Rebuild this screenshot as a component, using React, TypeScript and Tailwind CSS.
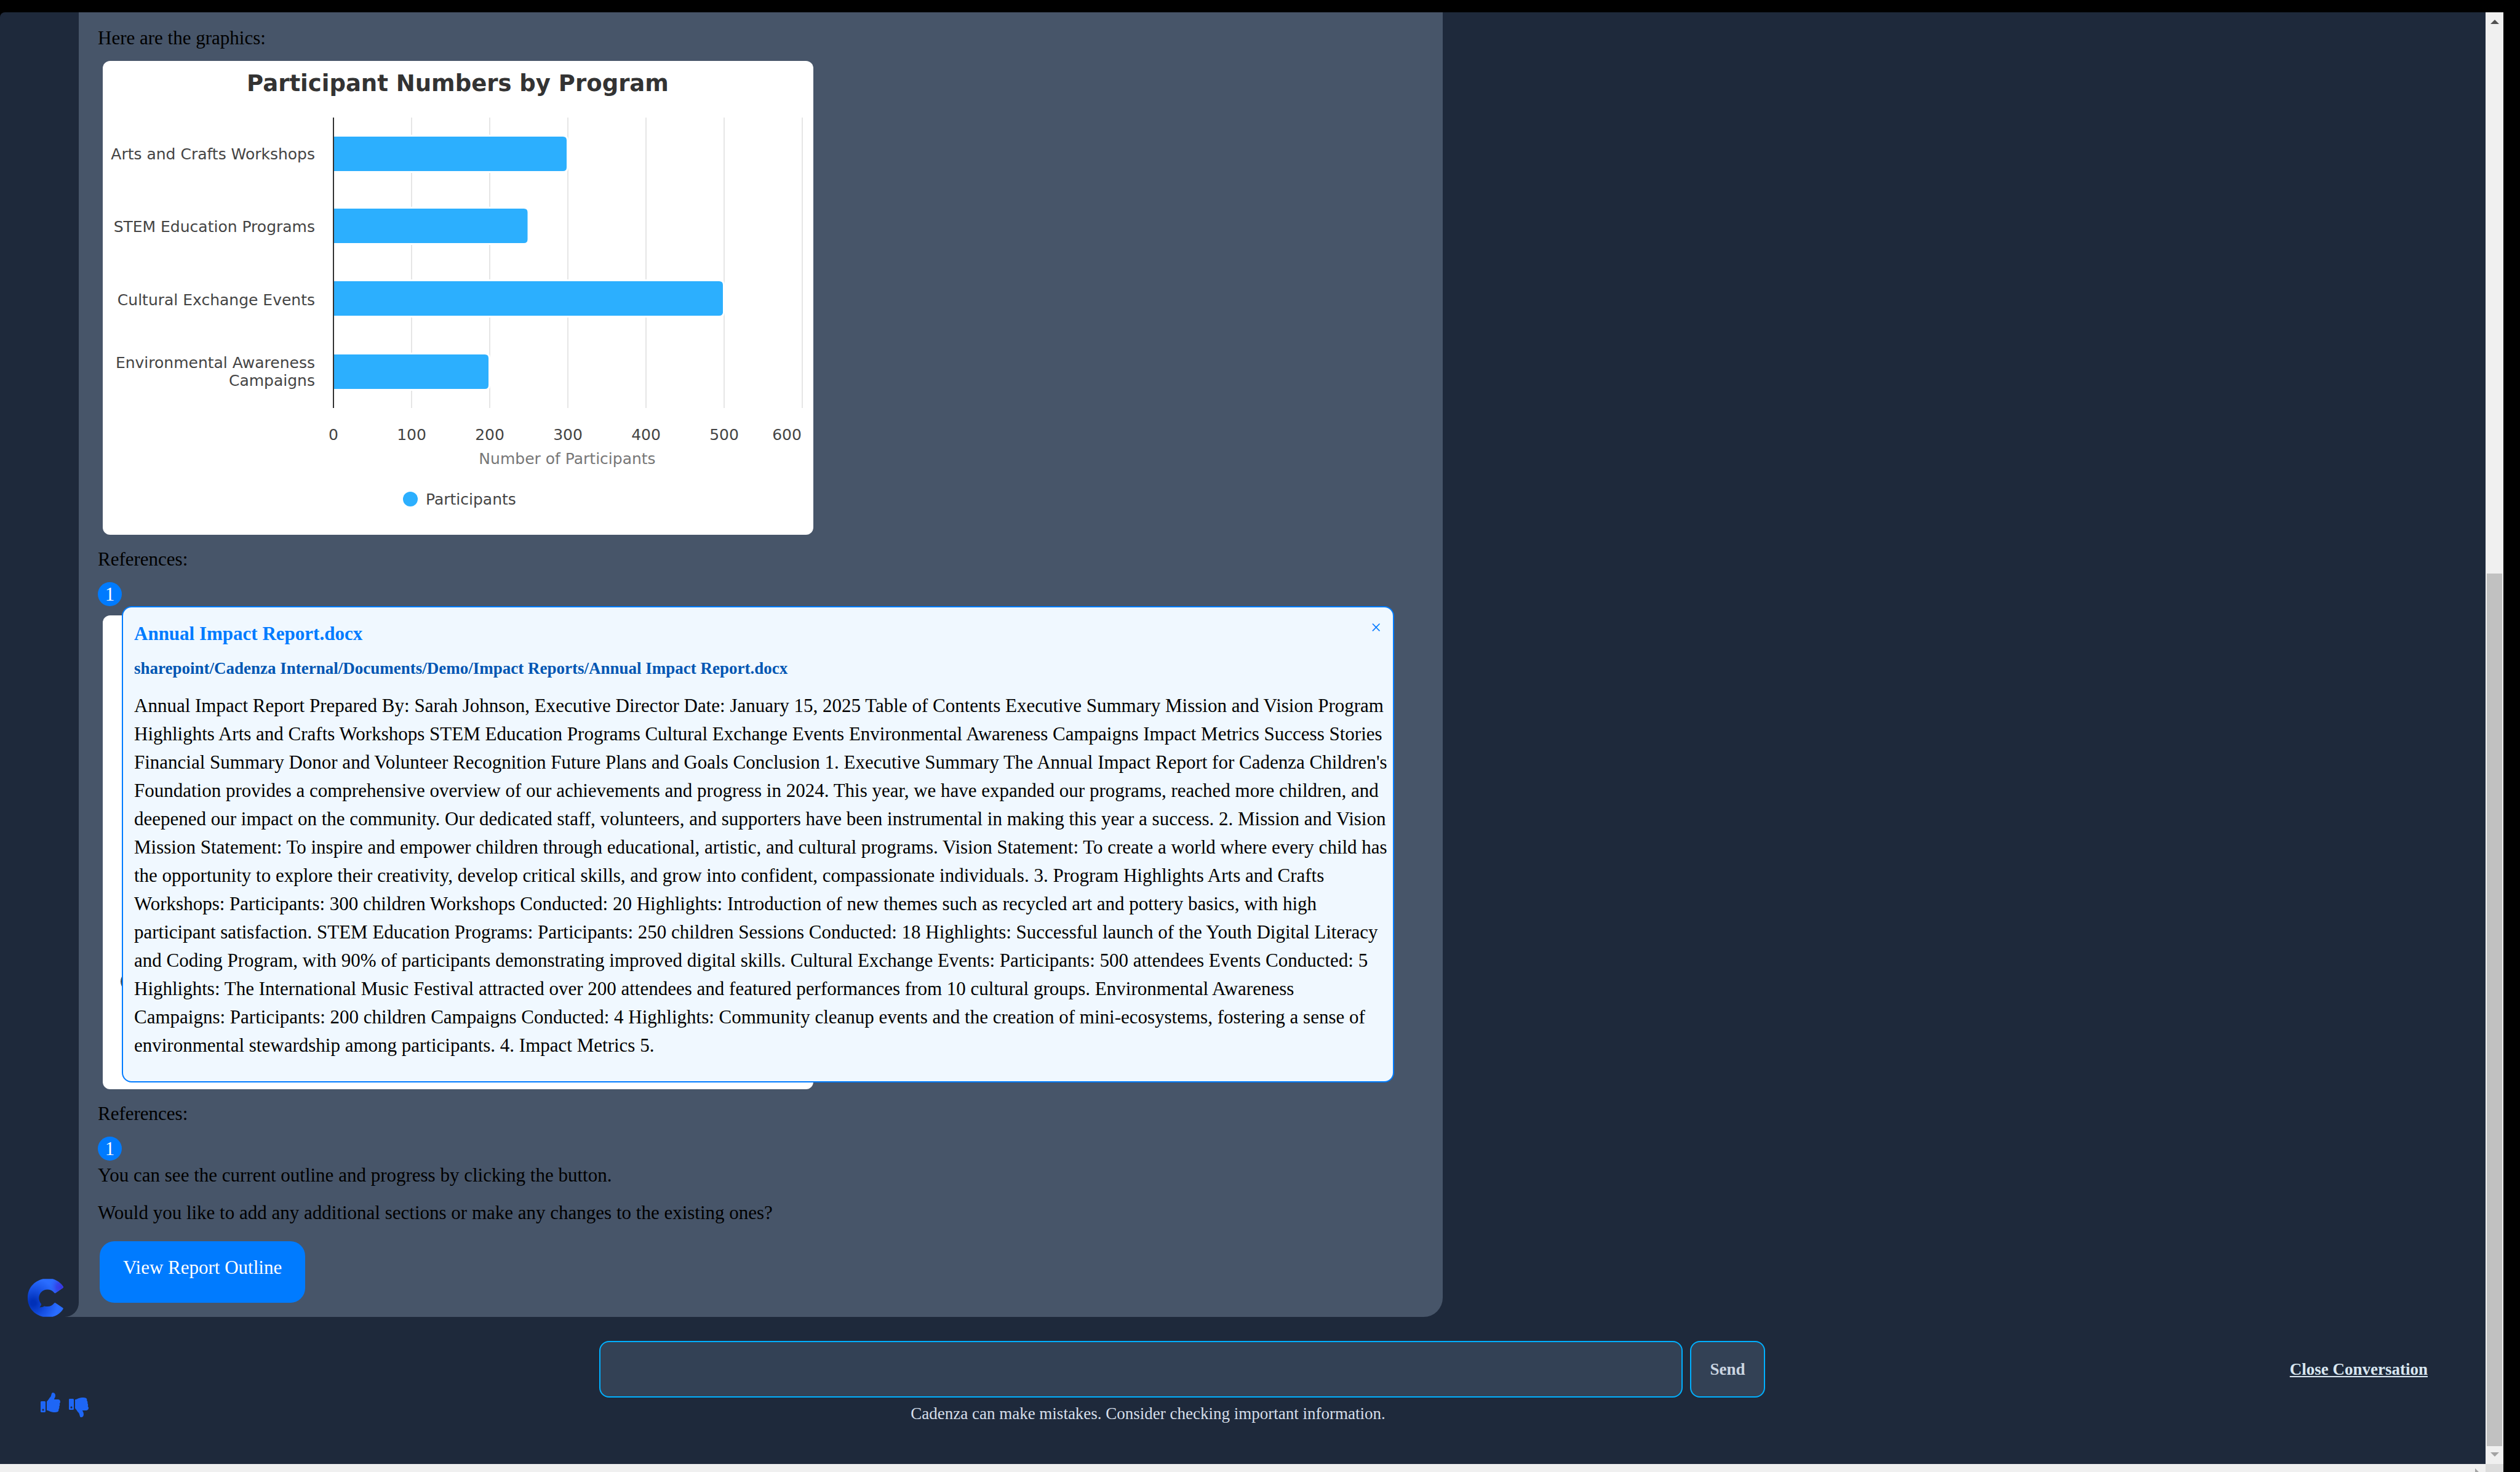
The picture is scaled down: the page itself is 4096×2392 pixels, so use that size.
import React from "react";
import { FaThumbsUp, FaThumbsDown } from "react-icons/fa";

const BARS = [
  { lines: ["Arts and Crafts Workshops"], value: 300, y: 123, baseline: 160 },
  { lines: ["STEM Education Programs"], value: 250, y: 240, baseline: 278 },
  { lines: ["Cultural Exchange Events"], value: 500, y: 358, baseline: 397 },
  { lines: ["Environmental Awareness", "Campaigns"], value: 200, y: 477, baseline: 499 },
];
const TICKS = [0, 100, 200, 300, 400, 500, 600];
const AXIS_X = 375;
const STEP = 127;

function ParticipantChart() {
  return (
    <svg viewBox="0 0 1155 770" className="block h-[770px] w-[1155px] rounded-xl bg-white" role="img" aria-label="Participant Numbers by Program" fontFamily='"DejaVu Sans", sans-serif'>
      <text x="577" y="49" textAnchor="middle" fontSize="37" fontWeight="700" fill="#333">
        Participant Numbers by Program
      </text>
      {TICKS.slice(1).map((t) => (
        <rect key={t} x={AXIS_X + (t / 100) * STEP - 1} y="92" width="2" height="472" fill="#e6e6e6" />
      ))}
      {BARS.map((b) => {
        const w = (b.value / 100) * STEP - 2;
        return (
          <path
            key={b.y}
            d={`M${AXIS_X} ${b.y}h${w - 6}q6 0 6 6v44q0 6 -6 6h${-(w - 6)}z`}
            fill="#2caffe"
            stroke="#fff"
            strokeWidth="6"
            paintOrder="stroke"
          />
        );
      })}
      <rect x={AXIS_X - 1} y="92" width="2" height="472" fill="#333" />
      {BARS.map((b) =>
        b.lines.map((line, i) => (
          <text key={line} x="345" y={b.baseline + i * 29} textAnchor="end" fontSize="25" fill="#444">
            {line}
          </text>
        )),
      )}
      {TICKS.map((t) => (
        <text key={t} x={t === 600 ? 1112 : AXIS_X + (t / 100) * STEP} y="616" textAnchor="middle" fontSize="25" fill="#444">
          {t}
        </text>
      ))}
      <text x="755" y="655" textAnchor="middle" fontSize="25" fill="#777">
        Number of Participants
      </text>
      <circle cx="500" cy="712" r="12" fill="#2caffe" />
      <text x="525" y="721" fontSize="25" fill="#444">
        Participants
      </text>
    </svg>
  );
}

function CoveredChart() {
  return (
    <svg viewBox="0 0 1155 770" className="block h-[770px] w-[1155px] rounded-xl bg-white" aria-hidden="true">
      <path d="M32 587q-4 8 0 16" fill="none" stroke="#444" strokeWidth="2" />
    </svg>
  );
}

function Logo() {
  return (
    <svg viewBox="0 0 181 192" className="block h-[62px] w-[58px]" aria-label="Cadenza" role="img">
      <defs>
        <radialGradient id="base" gradientUnits="userSpaceOnUse" cx="28" cy="122" r="125">
          <stop offset="0.1" stopColor="#0030b8" />
          <stop offset="0.55" stopColor="#1650e2" />
          <stop offset="1" stopColor="#2a6dff" />
        </radialGradient>
        <radialGradient id="tip" gradientUnits="userSpaceOnUse" cx="172" cy="42" r="68">
          <stop offset="0" stopColor="#3a32e0" />
          <stop offset="0.4" stopColor="#3440e6" stopOpacity="0.85" />
          <stop offset="1" stopColor="#2a6dff" stopOpacity="0" />
        </radialGradient>
        <path
          id="mark"
          d="M78 0H126C148 6 168 20 180 39Q182 43 178 46L142 71Q138 74 135 70C127 60 114 54 100 54C76 54 57 73 57 97C57 108 61 118 69 127C69 133 65 139 60 144C70 144 80 142 84 138C89 139 95 140 101 140C114 140 126 133 134 123Q137 119 141 122L178 147Q182 150 179 154C167 173 148 187 126 192H78C30 180 0 144 0 96C0 48 30 12 78 0Z"
        />
      </defs>
      <use href="#mark" fill="url(#base)" />
      <use href="#mark" fill="url(#tip)" />
    </svg>
  );
}

function ReferenceBadge({ children }: { children?: React.ReactNode }) {
  return (
    <div className="relative w-[39px]">
      <button type="button" className="block size-[39px] rounded-full bg-[#007bff] text-center leading-[39px] text-white">
        1
      </button>
      {children}
    </div>
  );
}

function ReferencePopup() {
  return (
    <section className="absolute top-full left-full z-10 w-[2068px] rounded-2xl border-2 border-[#007bff] bg-[#f0f8ff] pt-[25px] pr-2 pb-[35px] pl-[18px] text-black">
      <button type="button" aria-label="Close reference" className="absolute top-[17px] right-[12px] size-[31px] text-center leading-[31px] text-[#007bff]">
        ×
      </button>
      <h2 className="font-bold text-[#007bff]">Annual Impact Report.docx</h2>
      <h3 className="mt-6 text-[27px] leading-[31px] font-bold text-[#0056b3]">
        sharepoint/Cadenza Internal/Documents/Demo/Impact Reports/Annual Impact Report.docx
      </h3>
      <p className="mt-[22px] leading-[46px]">
        Annual Impact Report Prepared By: Sarah Johnson, Executive Director Date: January 15, 2025 Table of Contents
        Executive Summary Mission and Vision Program Highlights Arts and Crafts Workshops STEM Education Programs
        Cultural Exchange Events Environmental Awareness Campaigns Impact Metrics Success Stories Financial Summary
        Donor and Volunteer Recognition Future Plans and Goals Conclusion 1. Executive Summary The Annual Impact Report
        for Cadenza Children's Foundation provides a comprehensive overview of our achievements and progress in 2024.
        This year, we have expanded our programs, reached more children, and deepened our impact on the community. Our
        dedicated staff, volunteers, and supporters have been instrumental in making this year a success. 2. Mission and
        Vision Mission Statement: To inspire and empower children through educational, artistic, and cultural programs.
        Vision Statement: To create a world where every child has the opportunity to explore their creativity, develop
        critical skills, and grow into confident, compassionate individuals. 3. Program Highlights Arts and Crafts
        Workshops: Participants: 300 children Workshops Conducted: 20 Highlights: Introduction of new themes such as
        recycled art and pottery basics, with high participant satisfaction. STEM Education Programs: Participants: 250
        children Sessions Conducted: 18 Highlights: Successful launch of the Youth Digital Literacy and Coding Program,
        with 90% of participants demonstrating improved digital skills. Cultural Exchange Events: Participants: 500
        attendees Events Conducted: 5 Highlights: The International Music Festival attracted over 200 attendees and
        featured performances from 10 cultural groups. Environmental Awareness Campaigns: Participants: 200 children
        Campaigns Conducted: 4 Highlights: Community cleanup events and the creation of mini-ecosystems, fostering a
        sense of environmental stewardship among participants. 4. Impact Metrics 5.
      </p>
    </section>
  );
}

function Message() {
  return (
    <div className="flex">
      <div className="flex w-32 shrink-0 items-end pl-[45px]">
        <Logo />
      </div>
      <article className="relative w-[2217px] rounded-br-[31px] bg-[#475569] pt-6 pr-[31px] pb-[23px] pl-[31px] text-black">
        <div className="absolute right-full bottom-0 size-[23px] bg-[#475569]">
          <div className="size-full rounded-br-full bg-[#1e293b]" />
        </div>
        <p>Here are the graphics:</p>
        <div className="mt-5 pl-2">
          <ParticipantChart />
        </div>
        <p className="mt-[22px] mb-5">References:</p>
        <ReferenceBadge>
          <ReferencePopup />
        </ReferenceBadge>
        <div className="mt-[15px] pl-2">
          <CoveredChart />
        </div>
        <p className="mt-[22px] mb-5">References:</p>
        <ReferenceBadge />
        <p className="mt-[6px]">You can see the current outline and progress by clicking the button.</p>
        <p className="mt-[26px]">Would you like to add any additional sections or make any changes to the existing ones?</p>
        <button type="button" className="mt-[29px] ml-[3px] block rounded-3xl bg-[#007bff] px-[38px] pt-[25px] pb-10 text-white">
          View Report Outline
        </button>
      </article>
    </div>
  );
}

function Footer() {
  return (
    <footer className="grid grid-cols-[974px_1fr_1171px] pt-[39px] text-[27px] leading-[31px]">
      <div className="flex items-start gap-[14px] pt-[84px] pl-[66px] text-[#1e66f5]">
        <button type="button" aria-label="Helpful">
          <FaThumbsUp className="size-8" />
        </button>
        <button type="button" aria-label="Not helpful" className="pt-2">
          <FaThumbsDown className="size-8" />
        </button>
      </div>
      <div>
        <form className="flex h-[92px] gap-3" onSubmit={(e) => e.preventDefault()}>
          <input type="text" aria-label="Message" className="min-w-0 flex-1 rounded-2xl border-2 border-[#00b0ff] bg-[#334155] px-6 text-[#cbd5e1]" />
          <button type="submit" className="w-[122px] rounded-2xl border-2 border-[#00b0ff] bg-[#334155] font-bold text-[#cbd5e1]">
            Send
          </button>
        </form>
        <p className="mt-[11px] pr-[111px] text-center text-[#d6dfea]">
          Cadenza can make mistakes. Consider checking important information.
        </p>
      </div>
      <div className="flex h-[92px] items-center justify-end pr-[94px]">
        <a href="#close" className="font-bold text-[#d9e6f0] underline">
          Close Conversation
        </a>
      </div>
    </footer>
  );
}

function VerticalScrollbar() {
  return (
    <div className="flex w-[29px] shrink-0 flex-col items-center bg-[#f0f0f0]" aria-hidden="true">
      <svg viewBox="0 0 14 7" className="mt-3 h-[7px] w-[14px]">
        <path d="M0 7L7 0L14 7Z" fill="#505050" />
      </svg>
      <div className="grow-[893]" />
      <div className="w-[25px] grow-[1418] bg-[#c1c1c1]" />
      <svg viewBox="0 0 14 7" className="mt-[10px] mb-3 h-[7px] w-[14px]">
        <path d="M0 0L7 7L14 0Z" fill="#a3a3a3" />
      </svg>
    </div>
  );
}

export default function App() {
  return (
    <div className='flex h-screen flex-col overflow-hidden bg-black pt-5 pr-[27px] font-["Liberation_Serif",serif] text-[31px] leading-[35px]'>
      <div className="flex min-h-0 flex-1">
        <main className="min-w-0 flex-1 overflow-hidden rounded-tl-lg bg-[#1e293b]">
          <Message />
          <Footer />
        </main>
        <VerticalScrollbar />
      </div>
      <div className="flex h-[13px] shrink-0" aria-hidden="true">
        <div className="flex flex-1 justify-end overflow-hidden bg-[#f0f0f0] pt-[7px] pr-[10px]">
          <svg viewBox="0 0 7 14" className="h-[14px] w-[7px] shrink-0">
            <path d="M0 0L7 7L0 14Z" fill="#a3a3a3" />
          </svg>
        </div>
        <div className="w-[29px] bg-[#dcdcdc]" />
      </div>
    </div>
  );
}
